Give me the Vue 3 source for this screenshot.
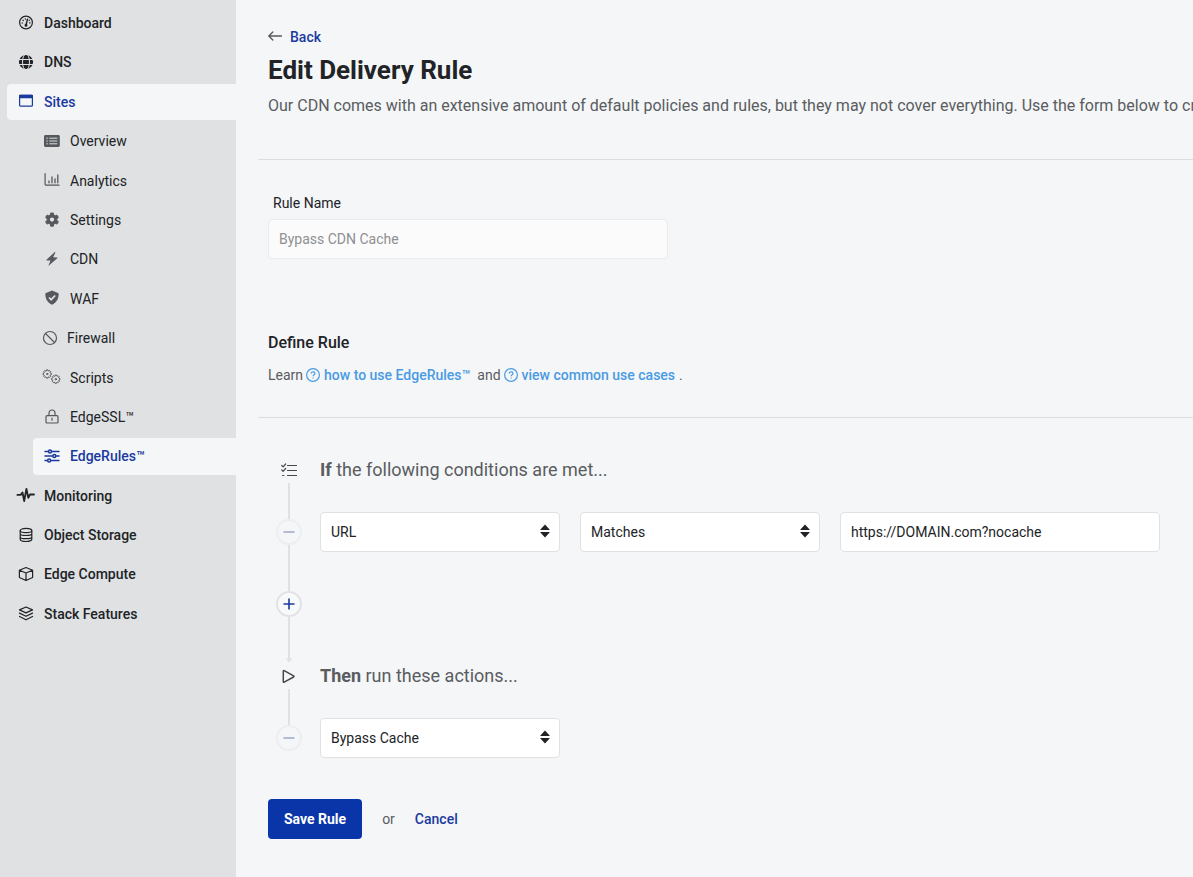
<script setup>
import { ref } from 'vue'

const ruleName = ref('Bypass CDN Cache')
const field = ref('URL')
const operator = ref('Matches')
const value = ref('https://DOMAIN.com?nocache')
const action = ref('Bypass Cache')

const items = [
  { label: 'Dashboard', icon: 'gauge' },
  { label: 'DNS', icon: 'globe' },
  { label: 'Sites', icon: 'window', active: true },
  { label: 'Overview', icon: 'list', sub: true },
  { label: 'Analytics', icon: 'chart', sub: true },
  { label: 'Settings', icon: 'gear', sub: true },
  { label: 'CDN', icon: 'bolt', sub: true },
  { label: 'WAF', icon: 'shield', sub: true },
  { label: 'Firewall', icon: 'ban', sub: true, narrow: true },
  { label: 'Scripts', icon: 'gears', sub: true },
  { label: 'EdgeSSL™', icon: 'lock', sub: true },
  { label: 'EdgeRules™', icon: 'sliders', sub: true, active: true },
  { label: 'Monitoring', icon: 'pulse' },
  { label: 'Object Storage', icon: 'database' },
  { label: 'Edge Compute', icon: 'cube' },
  { label: 'Stack Features', icon: 'layers' }
]

function gearPath(cx, cy, outer, inner, teeth) {
  const step = (Math.PI * 2) / teeth
  const points = []
  for (let i = 0; i < teeth; i++) {
    const a = i * step - Math.PI / 2
    for (const [r, o] of [[inner, -0.33], [outer, -0.2], [outer, 0.2], [inner, 0.33]]) {
      points.push(`${(cx + r * Math.cos(a + o * step)).toFixed(2)} ${(cy + r * Math.sin(a + o * step)).toFixed(2)}`)
    }
  }
  return `M${points.join('L')}Z`
}

const gear = gearPath(8, 7.6, 6.7, 4.9, 6)
const gearA = gearPath(3.2, 5, 4.2, 3.4, 8)
const gearB = gearPath(11.8, 10.2, 4.2, 3.4, 8)
</script>

<template>
  <div class="layout">
    <nav class="sidebar" aria-label="Main">
      <a
        v-for="item in items"
        :key="item.label"
        href="#"
        class="nav-item"
        :class="{ sub: item.sub, active: item.active, narrow: item.narrow }"
      >
        <svg class="nav-icon" :viewBox="item.narrow ? '1 0 13 16' : '0 0 16 16'" aria-hidden="true">
          <g v-if="item.icon === 'gauge'" class="line">
            <circle cx="8" cy="7.5" r="6.4" />
            <path d="M8 10 9.500 4.200" stroke-width="1.4" />
            <circle cx="8" cy="10.2" r=".9" class="solid" />
            <path d="M4 8h.6M5 5.200l.3.300M7.300 3.900l.1.300M11.500 7.800h.6M11.200 5.400l.200-.2" />
          </g>
          <g v-else-if="item.icon === 'globe'">
            <circle cx="8" cy="8" r="7.1" class="solid" />
            <g class="cut">
              <ellipse cx="8" cy="8" rx="3.5" ry="8" />
              <path d="M0 5.500h16M0 10.500h16" />
            </g>
          </g>
          <g v-else-if="item.icon === 'window'" class="line">
            <rect x="1.6" y="2.4" width="12.8" height="10.800" rx="1" />
            <path d="M1.6 2.4h12.8v2.200H1.6z" class="solid" />
          </g>
          <g v-else-if="item.icon === 'list'">
            <rect x="0" y="2" width="15.8" height="12" rx="1.4" class="solid" />
            <path d="M2.3 5.2h1.5M2.3 8h1.5M2.3 10.8h1.5M5.3 5.2h8M5.3 8h8M5.3 10.8h8" class="cut" />
          </g>
          <g v-else-if="item.icon === 'chart'" class="line">
            <path d="M1.1 1.6v10.6q0 1 1 1H15" />
            <path d="M5 10.800V9M8 10.800V5M11 10.800V6.8M13.8 10.800V3" stroke-width="1.3" />
          </g>
          <g v-else-if="item.icon === 'gear'">
            <path :d="gear" class="solid rounded" />
            <circle cx="8" cy="7.600" r="2.1" class="hole" />
          </g>
          <path v-else-if="item.icon === 'bolt'" d="M10.8 1 2.5 8.7q-.5.6.3.7l3.7.2L4.3 15l9-7.8q.5-.6-.2-.7l-4-.3L11.4 1.5Q11.4.8 10.8 1Z" class="solid" />
          <g v-else-if="item.icon === 'shield'">
            <path d="M8 .6 14 3q.8.3.7 1.3C14.500 9.500 12 13 8 14.700 4 13 1.500 9.500 1.300 4.300q-.1-1 .7-1.300Z" class="solid" />
            <path d="m5 7.500 2.200 2.200 4-4.200" class="cut" stroke-width="1.700" />
          </g>
          <g v-else-if="item.icon === 'ban'" class="line">
            <circle cx="7" cy="8" r="6.500" />
            <path d="m2.500 3.500 9 9" />
          </g>
          <g v-else-if="item.icon === 'gears'" class="line thin">
            <path :d="gearA" /><circle cx="3.200" cy="5" r=".6" class="solid" />
            <path :d="gearB" /><circle cx="11.800" cy="10.200" r=".6" class="solid" />
          </g>
          <g v-else-if="item.icon === 'lock'" class="line">
            <rect x="2" y="6.700" width="12" height="7.300" rx="1" />
            <path d="M5 6.500V4a3 3 0 0 1 6 0v2.500M8 9.200v2" />
          </g>
          <g v-else-if="item.icon === 'sliders'" class="line slider">
            <path d="M1 3.400h3.100M7.900 3.400H15M1 8h7.400M12.200 8H15M1 12.600h2.200M7 12.600h8" />
            <circle cx="6" cy="3.400" r="1.500" /><circle cx="10.300" cy="8" r="1.500" /><circle cx="5.100" cy="12.600" r="1.500" />
          </g>
          <path v-else-if="item.icon === 'pulse'" d="M-.6 7.900h3.300l1.800-2.400L6.200 14 8.400 1.800l1.900 9 1.700-3.300h4" class="line heavy" />
          <g v-else-if="item.icon === 'database'" class="line">
            <ellipse cx="8" cy="3.500" rx="5.800" ry="2.100" />
            <path d="M2.200 3.500v8.800c0 1.200 2.600 2.200 5.800 2.200s5.800-1 5.800-2.200V3.500M2.200 6.700c0 1.200 2.600 1.800 5.800 1.800s5.800-.6 5.800-1.800M2.200 9.900c0 1.200 2.600 1.800 5.800 1.800s5.800-.6 5.800-1.800" />
          </g>
          <path v-else-if="item.icon === 'cube'" d="m8 1.500 6.600 2.700v7.300L8 14.500l-6.600-3V4.200ZM1.400 4.200 8 7l6.600-2.800M8 7v7.500" class="line" />
          <path v-else d="m8 1 6.500 2.900L8 6.900 1.500 3.900ZM1.500 7.100 8 10.300l6.500-3.200M1.500 10.500 8 13.800l6.500-3.300" class="line" />
        </svg>
        <span>{{ item.label }}</span>
      </a>
    </nav>

    <main class="content">
      <header class="page-head">
        <a href="#" class="back">
          <svg viewBox="0 0 16 14" aria-hidden="true"><path d="M13.500 6H1M4.800 2 .8 6l4 4" /></svg>
          <span>Back</span>
        </a>
        <h1>Edit Delivery Rule</h1>
        <p class="intro">Our CDN comes with an extensive amount of default policies and rules, but they may not cover everything. Use the form below to create</p>
      </header>

      <form @submit.prevent>
        <section class="name-section">
          <label for="rule-name">Rule Name</label>
          <input id="rule-name" v-model="ruleName" type="text" disabled />
        </section>

        <section class="define">
          <h2>Define Rule</h2>
          <p class="learn">
            <span>Learn</span>
            <a href="#" class="help">
              <svg viewBox="0 0 14 14" aria-hidden="true"><circle cx="7" cy="7" r="6.400" /><path d="M5.200 5.600C5.200 3.300 9 3.400 9 5.500 9 6.800 7.100 6.800 7.100 8.200M7.100 9.600v1" /></svg>
              <span>how to use EdgeRules™</span>
            </a>
            <span class="joiner">and</span>
            <a href="#" class="help">
              <svg viewBox="0 0 14 14" aria-hidden="true"><circle cx="7" cy="7" r="6.400" /><path d="M5.200 5.600C5.200 3.300 9 3.400 9 5.500 9 6.800 7.100 6.800 7.100 8.200M7.100 9.600v1" /></svg>
              <span>view common use cases</span>
            </a>
            <span>.</span>
          </p>
        </section>

        <section class="flow">
          <div class="step head">
            <div class="rail">
              <svg class="step-icon" viewBox="0 0 16 16" aria-hidden="true"><path d="m.8 3.500 1.300 1.300L4.600 2M.8 8l1.300 1.300 2.500-2.800M1.600 13.500h1.200M6.500 3.500h9M6.500 8.500h9M6.500 13.500h9" /></svg>
            </div>
            <h3><strong>If</strong> the following conditions are met...</h3>
          </div>
          <div class="step">
            <div class="rail">
              <i class="wire"></i>
              <button type="button" class="round" disabled aria-label="Remove condition"><svg viewBox="0 0 12 12"><path d="M.5 6h11" /></svg></button>
              <i class="wire grow"></i>
            </div>
            <div class="fields">
              <div class="select">
                <select v-model="field" aria-label="Field"><option>URL</option></select>
                <svg viewBox="0 0 10 14" aria-hidden="true"><path d="M.4 5.500 5 .6l4.600 4.900v.5H.4ZM.4 8.500 5 13.400l4.600-4.900V8H.4Z" /></svg>
              </div>
              <div class="select">
                <select v-model="operator" aria-label="Operator"><option>Matches</option></select>
                <svg viewBox="0 0 10 14" aria-hidden="true"><path d="M.4 5.500 5 .6l4.600 4.900v.5H.4ZM.4 8.500 5 13.400l4.600-4.900V8H.4Z" /></svg>
              </div>
              <input v-model="value" class="value" type="text" aria-label="Value" />
            </div>
          </div>
          <div class="step">
            <div class="rail">
              <button type="button" class="round" aria-label="Add condition"><svg viewBox="0 0 12 12"><path d="M.5 6h11M6 .5v11" /></svg></button>
              <svg class="arrow" viewBox="0 0 8 46" aria-hidden="true"><path d="M4 0v43" /><path d="M.500 41.500h7L4 45.500Z" class="tip" /></svg>
            </div>
          </div>
          <div class="step head">
            <div class="rail">
              <svg class="step-icon play" viewBox="0 0 16 16" aria-hidden="true"><path d="M2.300 3.200v10.400q0 1 .9.500L12.600 9q.7-.6 0-1.200L3.200 2.700q-.9-.5-.9.500Z" /></svg>
            </div>
            <h3><strong>Then</strong> run these actions...</h3>
          </div>
          <div class="step last">
            <div class="rail">
              <i class="wire"></i>
              <button type="button" class="round" disabled aria-label="Remove action"><svg viewBox="0 0 12 12"><path d="M.5 6h11" /></svg></button>
            </div>
            <div class="fields">
              <div class="select">
                <select v-model="action" aria-label="Action"><option>Bypass Cache</option></select>
                <svg viewBox="0 0 10 14" aria-hidden="true"><path d="M.4 5.500 5 .6l4.600 4.900v.5H.4ZM.4 8.500 5 13.400l4.600-4.900V8H.4Z" /></svg>
              </div>
            </div>
          </div>
        </section>

        <div class="actions">
          <button type="submit" class="save">Save Rule</button>
          <span>or</span>
          <a href="#">Cancel</a>
        </div>
      </form>
    </main>
  </div>
</template>

<style>
body {
  margin: 0;
  background: #f4f6f8;
}
</style>

<style scoped>
.layout {
  display: flex;
  min-height: 100vh;
  font-family: Roboto, "Liberation Sans", sans-serif;
  font-size: 14px;
  color: #212326;
}
.layout * {
  box-sizing: border-box;
}
a {
  color: #1b3a9e;
  text-decoration: none;
}
h1, h2, h3, p {
  margin: 0;
}
input, select, button {
  font: inherit;
  color: inherit;
}
.sidebar {
  flex: 0 0 236px;
  display: flex;
  flex-direction: column;
  gap: 3px;
  padding: 5px 0 5px 7px;
  background: #dfe1e3;
}
.nav-item {
  --surface: #dfe1e3;
  display: flex;
  align-items: center;
  gap: 10px;
  padding: 7px 11px;
  line-height: 1.6;
  font-weight: 500;
  color: #212326;
  border-radius: 4px 0 0 4px;
}
.nav-item.sub {
  margin-left: 26px;
  font-weight: 400;
}
.nav-item.active {
  --surface: #f4f6f8;
  background: #f4f6f8;
  color: #1b3a9e;
}
.nav-item.sub.active {
  font-weight: 500;
}
.nav-icon {
  flex: none;
  width: 16px;
  height: 16px;
  overflow: visible;
  margin-bottom: 1px;
}
.narrow .nav-icon {
  width: 13px;
}
.sub:not(.active) .nav-icon {
  color: #55585c;
}
.line {
  fill: none;
  stroke: currentColor;
  stroke-width: 1.2;
  stroke-linecap: round;
  stroke-linejoin: round;
}
.thin {
  stroke-width: 1;
}
.heavy {
  stroke-width: 1.8;
}
.slider {
  stroke-width: 1.5;
}
.solid {
  fill: currentColor;
}
.rounded {
  stroke: currentColor;
  stroke-linejoin: round;
}
.hole {
  fill: var(--surface);
}
.cut {
  fill: none;
  stroke: var(--surface);
}
.content {
  flex: 1;
  min-width: 0;
  padding: 27px 0 38px 22px;
}
.page-head {
  padding: 0 0 41px 10px;
  border-bottom: 1px solid #dcdfe2;
}
.back {
  display: inline-flex;
  align-items: center;
  gap: 6px;
  line-height: 20px;
  font-weight: 500;
}
.back svg {
  width: 16px;
  height: 14px;
  fill: none;
  stroke: #55585c;
  stroke-width: 1.3;
  stroke-linecap: round;
  stroke-linejoin: round;
}
h1 {
  font-size: 26px;
  line-height: 46px;
  font-weight: 700;
}
.intro {
  margin-top: 1px;
  overflow: hidden;
  white-space: nowrap;
  font-size: 16px;
  line-height: 24px;
  color: #5a5c60;
}
.name-section {
  display: flex;
  flex-direction: column;
  gap: 6px;
  padding: 33px 10px 0;
}
.name-section label {
  padding-left: 5px;
  line-height: 20px;
}
input {
  height: 40px;
  padding: 0 10px;
  background: #fff;
  border: 1px solid #dfe1e3;
  border-radius: 4px;
}
.name-section input {
  width: 400px;
  max-width: 100%;
  background: #fbfbfb;
  border-color: #e9ebec;
  color: #8e9093;
}
.define {
  padding: 72px 10px 32px;
  border-bottom: 1px solid #dcdfe2;
}
h2 {
  font-size: 16px;
  line-height: 24px;
  font-weight: 500;
}
.learn {
  display: flex;
  align-items: center;
  gap: 4px;
  margin-top: 10px;
  line-height: 20px;
  color: #5a5c60;
}
.help {
  display: inline-flex;
  align-items: center;
  gap: 4px;
  margin-left: -1px;
  font-weight: 500;
  color: #4a9be3;
}
.joiner {
  padding-left: 3px;
}
.help svg {
  width: 14px;
  height: 14px;
  fill: none;
  stroke: currentColor;
  stroke-width: 1.2;
}
.flow {
  padding: 39px 33px 0 10px;
}
.step {
  display: grid;
  grid-template-columns: 42px minmax(0, 1fr);
  column-gap: 10px;
}
.step.head {
  align-items: center;
  min-height: 26px;
}
.rail {
  display: flex;
  flex-direction: column;
  align-items: center;
}
.step-icon {
  width: 16px;
  height: 16px;
  fill: none;
  stroke: #45484c;
  stroke-width: 1.2;
  stroke-linecap: round;
  stroke-linejoin: round;
}
.play {
  stroke-width: 1.5;
}
h3 {
  font-size: 18px;
  line-height: 26px;
  font-weight: 400;
  color: #5a5c60;
}
h3 strong {
  font-weight: 700;
}
.wire {
  width: 2px;
  height: 36px;
  background: #dfe1e4;
}
.wire.grow {
  flex: 1;
}
.round {
  display: grid;
  place-items: center;
  width: 26px;
  height: 26px;
  padding: 0;
  border: 2px solid #e0e2e5;
  border-radius: 50%;
  background: #f8f9fb;
  color: #1b3a9e;
}
.round:disabled {
  border-color: #eceef1;
  background: #f4f6f8;
  color: #a2add0;
}
.round svg {
  width: 12px;
  height: 12px;
  stroke: currentColor;
  stroke-width: 1.6;
}
.arrow {
  width: 8px;
  height: 46px;
  fill: none;
  stroke: #dfe1e4;
  stroke-width: 2;
}
.arrow .tip {
  fill: #dfe1e4;
  stroke: none;
}
.fields {
  display: flex;
  gap: 20px;
  padding: 29px 0 39px;
}
.last .fields {
  padding-bottom: 0;
}
.select {
  position: relative;
  flex: 0 1 240px;
  min-width: 0;
}
.select select {
  display: block;
  width: 100%;
  height: 40px;
  padding: 0 30px 0 10px;
  appearance: none;
  background: #fff;
  border: 1px solid #dfe1e3;
  border-radius: 4px;
}
.select svg {
  position: absolute;
  right: 10px;
  top: 12px;
  width: 10px;
  height: 14px;
  fill: #212326;
  pointer-events: none;
}
.value {
  flex: 0 1 320px;
  min-width: 0;
}
.actions {
  display: flex;
  align-items: center;
  gap: 20px;
  padding: 41px 10px 0;
  color: #5a5c60;
}
.actions a {
  font-weight: 500;
}
.save {
  height: 40px;
  padding: 0 16px;
  border: 0;
  border-radius: 4px;
  background: #0a35a8;
  color: #fff;
  font-weight: 700;
}
</style>
